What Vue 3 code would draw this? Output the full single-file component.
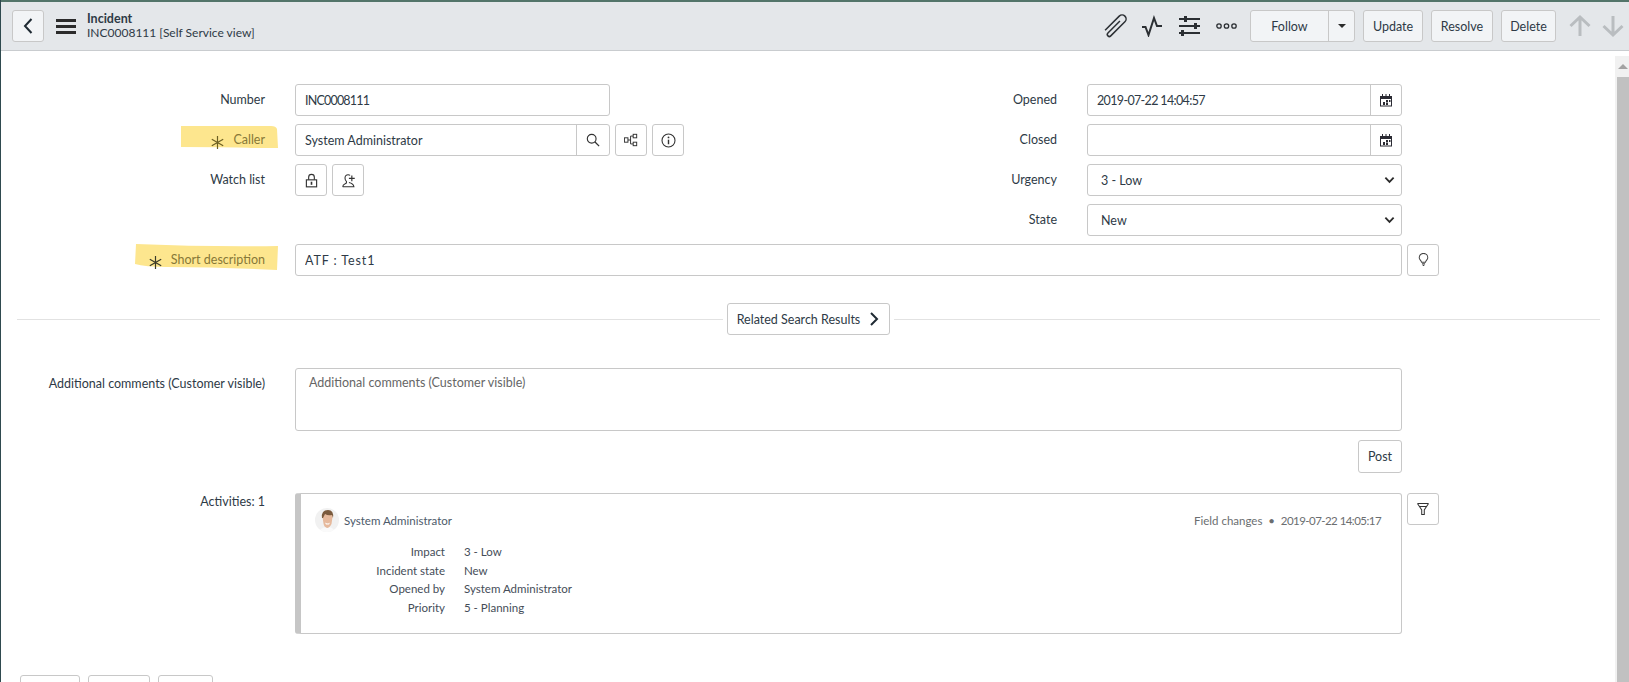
<script setup>
const activityRows = [
  { label: 'Impact', value: '3 - Low' },
  { label: 'Incident state', value: 'New' },
  { label: 'Opened by', value: 'System Administrator' },
  { label: 'Priority', value: '5 - Planning' }
]
</script>

<template>
  <div class="page">
    <header class="topbar">
      <button class="btn back-btn">
        <svg width="12" height="18" viewBox="0 0 12 18"><path d="M9.5 2 3 9l6.500 7" fill="none" stroke="#1f2a33" stroke-width="2"/></svg>
      </button>
      <div class="burger"><span></span><span></span><span></span></div>
      <div class="title">
        <div class="title-main">Incident</div>
        <div>INC0008111 [Self Service view]</div>
      </div>
      <div class="spacer"></div>
      <svg class="tool clip" width="24" height="24" viewBox="0 0 24 24"><path transform="rotate(45 12 12)" d="M12 5v17a2 2 0 0 0 4 0V2a4 4 0 0 0-8 0v20" fill="none" stroke="#2b2f33" stroke-width="1.500"/></svg>
      <svg class="tool pulse" width="22" height="22" viewBox="0 0 22 22"><path d="M1 12h3.500l3 8L13 3l3 8h5" fill="none" stroke="#2b2f33" stroke-width="2"/></svg>
      <svg class="tool sliders" width="21" height="22" viewBox="0 0 21 22">
        <path d="M0 4h21M0 11h21M0 18h21" stroke="#2b2f33" stroke-width="2"/>
        <rect x="5" y="1" width="3" height="6" fill="#2b2f33"/><rect x="15" y="8" width="3" height="6" fill="#2b2f33"/><rect x="2" y="15" width="3" height="6" fill="#2b2f33"/>
      </svg>
      <svg class="tool dots" width="21" height="8" viewBox="0 0 21 8"><g fill="none" stroke="#2b2f33" stroke-width="1.300"><circle cx="3" cy="4" r="2.200"/><circle cx="10.500" cy="4" r="2.200"/><circle cx="18" cy="4" r="2.200"/></g></svg>
      <div class="btn follow">
        <span class="follow-text">Follow</span>
        <span class="follow-caret"><i></i></span>
      </div>
      <button class="btn bar-btn update">Update</button>
      <button class="btn bar-btn resolve">Resolve</button>
      <button class="btn bar-btn delete">Delete</button>
      <svg class="arrow-up" width="24" height="24" viewBox="0 0 24 24"><path d="M12 22V3M2.500 12 12 3l9.500 9" fill="none" stroke="#b9bdc0" stroke-width="3"/></svg>
      <svg class="arrow-down" width="24" height="24" viewBox="0 0 24 24"><path d="M12 2v19M2.500 12l9.500 9 9.500-9" fill="none" stroke="#b9bdc0" stroke-width="3"/></svg>
    </header>

    <div class="main">
      <div class="content">
        <div class="top-form">
          <div class="column">
            <div class="field">
              <label>Number</label>
              <input class="input half tight" value="INC0008111" />
            </div>
            <div class="field">
              <label class="marked">
                <svg class="mark caller-mark" width="97" height="22" viewBox="0 0 97 22" preserveAspectRatio="none"><path d="M0 0H90q5 0 6 3l1 19H70q-8-1-70-1Z" fill="#fde68e"/></svg>
                <svg class="star" width="13" height="13" viewBox="0 0 13 13"><path d="M6.500 0v13M.8 3.200l11.400 6.600M12.200 3.200.8 9.800" stroke="#6c5f22" stroke-width="1.200"/></svg>
                <span>Caller</span>
              </label>
              <div class="control">
                <div class="group half">
                  <input class="group-input" value="System Administrator" />
                  <span class="addon">
                    <svg width="14" height="14" viewBox="0 0 16 16"><circle cx="6.500" cy="6.500" r="5" fill="none" stroke="#333" stroke-width="1.300"/><path d="m10 10 5 5" stroke="#333" stroke-width="1.500"/></svg>
                  </span>
                </div>
                <button class="btn icon-btn">
                  <svg width="14" height="14" viewBox="0 0 16 16"><g fill="none" stroke="#333" stroke-width="1.100"><rect x=".5" y="5.500" width="4" height="5"/><rect x="10.500" y="1.500" width="4" height="4"/><rect x="10.500" y="10.500" width="4" height="4"/><path d="M4.500 8h3V3.500h3M7.500 8v4.500h3"/></g></svg>
                </button>
                <button class="btn icon-btn">
                  <svg width="15" height="15" viewBox="0 0 18 18"><circle cx="9" cy="9" r="7.800" fill="none" stroke="#333" stroke-width="1.300"/><path d="M9 8v5.500" stroke="#333" stroke-width="1.700"/><circle cx="9" cy="5.300" r="1.100" fill="#333"/></svg>
                </button>
              </div>
            </div>
            <div class="field">
              <label>Watch list</label>
              <div class="control">
                <button class="btn icon-btn first">
                  <svg width="13" height="15" viewBox="0 0 16 18"><path d="M4.500 8V5a3.500 3.500 0 0 1 7 0v3" fill="none" stroke="#333" stroke-width="1.400"/><rect x="1.700" y="8.200" width="12.600" height="8.600" fill="none" stroke="#333" stroke-width="1.400"/><rect x="7" y="10.500" width="2" height="3.800" fill="#333"/></svg>
                </button>
                <button class="btn icon-btn">
                  <svg width="15" height="15" viewBox="0 0 18 18"><path d="M2 16.500c0-3 2.500-3.500 4.500-4.500V10C5 9 4.800 7.500 4.800 6c0-2.500 1.500-4 3.700-4 1 0 1.800.3 2.400.8M9.500 11.500c2.500.6 5.500 1.500 6 5H2" fill="none" stroke="#333" stroke-width="1.300"/><path d="M13 3v7M9.500 6.500h7" stroke="#333" stroke-width="1.400"/></svg>
                </button>
              </div>
            </div>
          </div>
          <div class="column">
            <div class="field">
              <label>Opened</label>
              <div class="group right-control">
                <input class="group-input tight-input" value="2019-07-22 14:04:57" />
                <span class="addon cal">
                  <svg width="14" height="14" viewBox="0 0 14 14"><g fill="#2b2b33"><path d="M1 3h12v10.500H1Zm1 3v6.500h10V6Z" fill-rule="evenodd"/><rect x="3" y="1" width="1" height="2"/><rect x="6.500" y="1" width="1" height="2"/><rect x="10" y="1" width="1" height="2"/><rect x="7" y="7" width="2" height="2"/><rect x="10" y="7" width="1.500" height="2"/><rect x="4" y="9" width="2" height="3"/><rect x="7" y="9.500" width="2" height="2.500"/></g></svg>
                </span>
              </div>
            </div>
            <div class="field">
              <label>Closed</label>
              <div class="group right-control">
                <input class="group-input" value="" />
                <span class="addon cal">
                  <svg width="14" height="14" viewBox="0 0 14 14"><g fill="#2b2b33"><path d="M1 3h12v10.500H1Zm1 3v6.500h10V6Z" fill-rule="evenodd"/><rect x="3" y="1" width="1" height="2"/><rect x="6.500" y="1" width="1" height="2"/><rect x="10" y="1" width="1" height="2"/><rect x="7" y="7" width="2" height="2"/><rect x="10" y="7" width="1.500" height="2"/><rect x="4" y="9" width="2" height="3"/><rect x="7" y="9.500" width="2" height="2.500"/></g></svg>
                </span>
              </div>
            </div>
            <div class="field">
              <label>Urgency</label>
              <div class="select right-control">
                <span>3 - Low</span>
                <svg width="11" height="8" viewBox="0 0 12 8"><path d="m1.500 1.500 4.500 4.500 4.500-4.500" fill="none" stroke="#2b2b2b" stroke-width="2"/></svg>
              </div>
            </div>
            <div class="field">
              <label>State</label>
              <div class="select right-control">
                <span>New</span>
                <svg width="11" height="8" viewBox="0 0 12 8"><path d="m1.500 1.500 4.500 4.500 4.500-4.500" fill="none" stroke="#2b2b2b" stroke-width="2"/></svg>
              </div>
            </div>
          </div>
        </div>

        <div class="field">
          <label class="marked">
            <svg class="mark short-mark" width="143" height="26" viewBox="0 0 143 26" preserveAspectRatio="none"><path d="M1 0q70 3 142 2l-1 24q-60-3-110-3Q10 23 0 20Z" fill="#fde68e"/></svg>
            <svg class="star" width="13" height="13" viewBox="0 0 13 13"><path d="M6.500 0v13M.8 3.200l11.400 6.600M12.200 3.200.8 9.800" stroke="#3a3a2a" stroke-width="1.200"/></svg>
            <span>Short description</span>
          </label>
          <div class="control">
            <input class="input wide spaced" value="ATF : Test1" />
            <button class="btn icon-btn">
              <svg width="11" height="14" viewBox="0 0 14 18"><path d="M4.500 12C4 9.500 1.500 8.500 1.500 6A5.500 5.500 0 0 1 12.500 6c0 2.500-2.500 3.500-3 6Z" fill="none" stroke="#444" stroke-width="1.300"/><path d="M5 14h4M6 16h2" stroke="#444" stroke-width="1.400"/></svg>
            </button>
          </div>
        </div>

        <div class="related">
          <span class="related-line"></span>
          <button class="btn related-btn">
            Related Search Results
            <svg width="12" height="16" viewBox="0 0 12 16"><path d="m3 2 6 6-6 6" fill="none" stroke="#1f2a33" stroke-width="2"/></svg>
          </button>
          <span class="related-line"></span>
        </div>

        <div class="field comments">
          <label>Additional comments (Customer visible)</label>
          <textarea class="textarea wide" placeholder="Additional comments (Customer visible)"></textarea>
        </div>
        <div class="post-row">
          <button class="btn post">Post</button>
        </div>

        <div class="field activities">
          <label>Activities: 1</label>
          <div class="control">
            <div class="card wide">
              <div class="card-head">
                <svg class="avatar" width="24" height="24" viewBox="0 0 24 24">
                  <defs>
                    <clipPath id="round"><circle cx="12" cy="12" r="12"/></clipPath>
                    <filter id="soft"><feGaussianBlur stdDeviation=".6"/></filter>
                  </defs>
                  <g clip-path="url(#round)">
                    <rect width="24" height="24" fill="#f1f1f1"/>
                    <g filter="url(#soft)">
                      <path d="M4 24q1-4 7-5h3q5 1 6 5Z" fill="#fafafa"/>
                      <path d="M7.500 9q0-6 5.500-6 4.500 0 4.500 6l-1 7q-2 4-4.500 4-3-1-3.500-4.500Z" fill="#e6b99c"/>
                      <path d="M7 10q-1-8 6-8 6 0 5 8l-1-3q-4 1-7-1l-2 4Z" fill="#7a5a3c"/>
                      <path d="M10 14.500q3 2 5 0l-1 2h-3Z" fill="#fff"/>
                    </g>
                  </g>
                </svg>
                <span class="card-user">System Administrator</span>
                <span class="card-meta">Field changes &nbsp;•&nbsp; <span class="tight-date">2019-07-22 14:05:17</span></span>
              </div>
              <div class="card-rows">
                <template v-for="row in activityRows" :key="row.label">
                  <span class="row-label">{{ row.label }}</span>
                  <span>{{ row.value }}</span>
                </template>
              </div>
            </div>
            <button class="btn icon-btn">
              <svg width="12" height="14" viewBox="0 0 14 16"><path d="M.5 1.500h13M.5 1.500 5.500 9v5.500h3V9l5-7.500M3 5h8" fill="none" stroke="#333" stroke-width="1.200"/></svg>
            </button>
          </div>
        </div>

        <div class="bottom-buttons">
          <button class="btn update" aria-label="Update"></button>
          <button class="btn resolve" aria-label="Resolve"></button>
          <button class="btn delete" aria-label="Delete"></button>
        </div>
      </div>

      <div class="scrollbar">
        <div class="scroll-up"><i></i></div>
        <div class="scroll-thumb"></div>
      </div>
    </div>
  </div>
</template>

<style>
html, body {
  margin: 0;
  height: 100%;
  overflow: hidden;
  background: #fff;
}
</style>

<style scoped>
.page {
  height: 682px;
  overflow: hidden;
  display: flex;
  flex-direction: column;
  border-left: 1px solid #2f4a4f;
  font-family: Lato, "Liberation Sans", sans-serif;
  font-size: 12.500px;
  color: #2e3a46;
}
.topbar {
  flex: none;
  box-sizing: border-box;
  height: 51px;
  display: flex;
  align-items: center;
  background: #e4e7ea;
  border-top: 2px solid #53756a;
  border-bottom: 1px solid #c9cccf;
  padding: 0 4px 0 11px;
}
.btn {
  box-sizing: border-box;
  height: 32px;
  border: 1px solid #c8c8c8;
  border-radius: 3px;
  background: #fff;
  font: inherit;
  color: inherit;
  padding: 0;
  display: flex;
  align-items: center;
  justify-content: center;
}
.topbar .btn {
  background: #f2f4f6;
}
.back-btn {
  width: 32px;
}
.burger {
  margin-left: 12px;
  width: 20px;
  display: flex;
  flex-direction: column;
  gap: 3px;
}
.burger span {
  height: 3px;
  background: #2b2b2b;
}
.title {
  margin-left: 11px;
  line-height: 14px;
  font-size: 12px;
}
.title-main {
  font-size: 12.500px;
  font-weight: 700;
}
.spacer {
  flex: 1;
}
.clip {
  margin-right: 14px;
  overflow: visible;
}
.pulse {
  margin-right: 16px;
}
.sliders {
  margin-right: 16px;
}
.dots {
  margin-right: 13px;
}
.follow {
  width: 105px;
  align-items: stretch;
}
.follow-text {
  flex: 1;
  display: flex;
  align-items: center;
  justify-content: center;
  border-right: 1px solid #c8c8c8;
}
.follow-caret {
  width: 25px;
  display: flex;
  align-items: center;
  justify-content: center;
}
.follow-caret i {
  border-left: 4px solid transparent;
  border-right: 4px solid transparent;
  border-top: 4px solid #2b2b2b;
}
.bar-btn {
  margin-left: 8px;
}
.update {
  width: 60px;
}
.resolve {
  width: 62px;
}
.delete {
  width: 55px;
}
.arrow-up {
  margin-left: 12px;
}
.arrow-down {
  margin-left: 9px;
}
.main {
  flex: 1;
  min-height: 0;
  display: flex;
}
.content {
  flex: 1;
  min-width: 0;
  padding-top: 33px;
}
.top-form {
  display: grid;
  grid-template-columns: 792px 1fr;
}
.field {
  display: grid;
  grid-template-columns: 264px 1fr;
  column-gap: 30px;
  margin-bottom: 8px;
}
.field label {
  position: relative;
  box-sizing: border-box;
  display: flex;
  justify-content: flex-end;
  align-items: center;
  gap: 4px;
  height: 32px;
  padding-bottom: 2px;
  white-space: nowrap;
}
.marked span,
.star {
  position: relative;
}
.marked span {
  color: #877838;
}
.mark {
  position: absolute;
  right: -13px;
}
.caller-mark {
  top: 2px;
}
.short-mark {
  top: 0;
}
.star {
  margin: 6px 5px 0 0;
}
.control {
  display: flex;
  gap: 5px;
}
.input,
.group,
.select,
.textarea {
  box-sizing: border-box;
  border: 1px solid #c8c8c8;
  border-radius: 3px;
  background: #fff;
}
.input,
.group-input {
  height: 32px;
  padding: 0 9px;
  font: inherit;
  color: inherit;
  outline: none;
}
.tight {
  letter-spacing: -0.8px;
}
.tight-input {
  letter-spacing: -0.65px;
}
.tight-date {
  letter-spacing: -0.55px;
}
.spaced {
  letter-spacing: 0.9px;
}
.half {
  width: 315px;
}
.wide {
  width: 1107px;
}
.right-control {
  width: 315px;
}
.group {
  height: 32px;
  display: flex;
}
.group-input {
  flex: 1;
  min-width: 0;
  height: 30px;
  border: 0;
  background: transparent;
}
.addon {
  width: 32px;
  border-left: 1px solid #c8c8c8;
  display: flex;
  align-items: center;
  justify-content: center;
}
.cal {
  width: 30px;
}
.icon-btn {
  width: 32px;
  flex: none;
}
.select {
  height: 32px;
  display: flex;
  align-items: center;
  justify-content: space-between;
  padding: 0 6px 0 13px;
}
.related {
  margin: 27px 15px 33px 16px;
  display: flex;
  align-items: center;
  gap: 4px;
}
.related-line {
  flex: 1;
  height: 1px;
  background: #e2e2e2;
}
.related-btn {
  width: 163px;
  gap: 8px;
}
.comments {
  margin-bottom: 9px;
}
.textarea {
  display: block;
  height: 63px;
  padding: 6px 13px;
  font: inherit;
  color: inherit;
  resize: none;
  outline: none;
}
.textarea::placeholder {
  color: #666;
  opacity: 1;
}
.post-row {
  padding-left: 1063px;
  margin-left: 294px;
  margin-bottom: 20px;
}
.post {
  width: 44px;
  height: 33px;
}
.activities {
  margin-bottom: 41px;
}
.field.activities label {
  height: 16px;
  padding-bottom: 0;
}
.card {
  box-sizing: border-box;
  height: 141px;
  border: 1px solid #c8c8c8;
  border-left: 6px solid #c6c6c6;
  border-radius: 3px;
  padding: 14px 20px 0 14px;
  font-size: 11.500px;
}
.card-head {
  display: flex;
  align-items: center;
  height: 24px;
}
.card-user {
  margin-left: 5px;
  flex: 1;
  color: #4d5a6a;
}
.card-meta {
  color: #6b6e70;
}
.card-rows {
  margin-top: 11px;
  display: grid;
  grid-template-columns: 130px 1fr;
  column-gap: 19px;
  grid-auto-rows: 18.700px;
  line-height: 18.700px;
  color: #454d58;
}
.row-label {
  text-align: right;
}
.bottom-buttons {
  display: flex;
  gap: 8px;
  padding-left: 19px;
}
.bottom-buttons .btn {
  height: 33px;
}
.scrollbar {
  flex: none;
  width: 14px;
  margin-top: 5px;
  background: #f1f1f1;
  display: flex;
  flex-direction: column;
}
.scroll-up {
  height: 21px;
  display: flex;
  align-items: center;
  justify-content: flex-end;
  padding-right: 1px;
}
.scroll-up i {
  border-left: 5px solid transparent;
  border-right: 5px solid transparent;
  border-bottom: 5px solid #a3a3a3;
}
.scroll-thumb {
  flex: 1;
  margin-left: 2px;
  background: #c1c1c1;
}
</style>
